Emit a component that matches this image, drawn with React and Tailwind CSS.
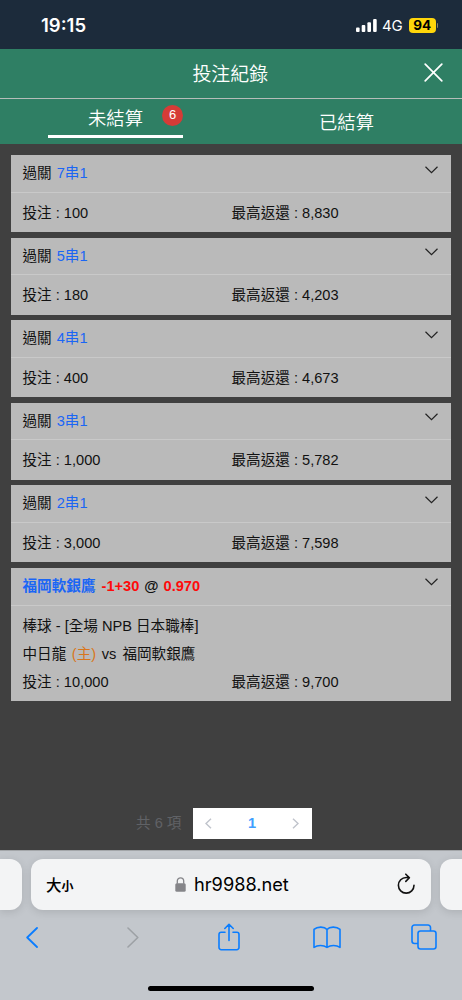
const latin = "font-['Liberation_Sans','Noto_Sans_CJK_TC',sans-serif]";

const parlays = [
  { type: "7串1", stake: "100", payout: "8,830" },
  { type: "5串1", stake: "180", payout: "4,203" },
  { type: "4串1", stake: "400", payout: "4,673" },
  { type: "3串1", stake: "1,000", payout: "5,782" },
  { type: "2串1", stake: "3,000", payout: "7,598" },
];

const StatusBar = () => (
  <div className="h-[49px] bg-[#1c2b3b] flex items-center justify-between pl-[41px] pr-[24px] pt-[2px] text-white font-[Inter,sans-serif]">
    <span className="text-[18.5px] leading-none font-semibold">19:15</span>
    <div className="flex items-center">
      <svg className="w-[21px] h-[13px]" viewBox="0 0 21 13" fill="#fff">
        <rect x="0" y="8.5" width="3.6" height="4.5" rx="1" />
        <rect x="5.7" y="6" width="3.6" height="7" rx="1" />
        <rect x="11.4" y="3.2" width="3.6" height="9.8" rx="1" />
        <rect x="17.1" y="0" width="3.6" height="13" rx="1" />
      </svg>
      <span className="ml-[5px] w-[21px] text-[15px] leading-none tracking-[-0.2px]">4G</span>
      <span className="ml-[6px] w-[26.5px] h-[15px] rounded-[4px] bg-[#ffd60a] text-black text-[13.5px] leading-[15px] font-bold text-center">94</span>
      <span className="ml-px w-[1.5px] h-[5px] rounded-r bg-[#8a8667]" />
    </div>
  </div>
);

const Header = () => (
  <header className="bg-[#2f7f64] text-white font-['Noto_Sans_CJK_TC',sans-serif]">
    <div className="h-[50px] border-b border-[#b5bdb9] flex items-center px-[23px]">
      <span className="w-[14px]" />
      <h1 className="flex-1 -mt-[2px] text-center text-[18.9px] leading-[28px] font-[350]">投注紀錄</h1>
      <svg className="w-[19px] h-[19px] -mr-[3.5px] -mt-[2px]" viewBox="0 0 19 19" fill="none" stroke="#fff" strokeWidth="1.7" strokeLinecap="round">
        <path d="M1.2 1.2l16.6 16.6M17.8 1.2l-16.6 16.6" />
      </svg>
    </div>
    <nav className="h-[45px] flex text-[18.3px] leading-[28px] font-[350]">
      <div className="w-1/2 flex justify-center">
        <div className="relative w-[135px] h-[39px] border-b-[3px] border-white text-center pt-[4px]">
          未結算
          <span className="absolute right-0 top-[6px] w-[21px] h-[21px] rounded-full bg-[#d63b37] text-[13px] leading-[20px] font-['Liberation_Sans',sans-serif]">6</span>
        </div>
      </div>
      <div className="w-1/2 text-center pt-[8px]">已結算</div>
    </nav>
  </header>
);

const Chevron = () => (
  <svg className="w-[13px] h-[8px] mt-[10.5px]" viewBox="0 0 13 8" fill="none" stroke="#222" strokeWidth="1.2">
    <path d="M0.5 0.8l6 5.8 6-5.8" />
  </svg>
);

const Amounts = ({ stake, payout }) => (
  <div className="flex">
    <span className="w-[209px]">投注 : {stake}</span>
    <span>最高返還 : {payout}</span>
  </div>
);

const Card = ({ title, children }) => (
  <div className="bg-[#bababa]">
    <div className="h-[37.6px] border-b border-[#c9c9c9] flex justify-between pl-[11.5px] pr-[13px] leading-[37px]">
      <div>{title}</div>
      <Chevron />
    </div>
    <div className="pl-[11.5px] pt-[6px] pb-[5.5px] leading-[28px]">{children}</div>
  </div>
);

const Toolbar = () => (
  <footer className="h-[150px] bg-[#c3c7cc] border-t border-[#a3a6a9] overflow-hidden font-[Inter,sans-serif]">
    <div className="h-[58px] pt-[8px] flex gap-[9px]">
      <div className="w-[22px] h-[51px] shrink-0 rounded-r-[12px] bg-[#f3f4f5] shadow-[0_2px_8px_rgba(0,0,0,0.12)]" />
      <div className="w-[400px] h-[51px] shrink-0 rounded-[12px] bg-[#f3f4f5] shadow-[0_2px_8px_rgba(0,0,0,0.12)] flex items-center px-[15px]">
        <div className="w-[129px] font-['Noto_Sans_CJK_TC',sans-serif] font-medium text-black flex items-baseline">
          <span className="text-[15.5px]">大</span>
          <span className="text-[12px] font-bold">小</span>
        </div>
        <svg className="w-[11px] h-[15px]" viewBox="0 0 11 15">
          <rect x="0.3" y="6.2" width="10.4" height="8.5" rx="1.5" fill="#858589" />
          <path d="M2.3 6.8V4a3.2 3.2 0 0 1 6.4 0v2.8" fill="none" stroke="#858589" strokeWidth="1.3" />
        </svg>
        <span className="ml-[8px] flex-1 text-[18.2px] leading-none text-black">hr9988.net</span>
        <svg className="w-[20px] h-[22px] -mt-[2px]" viewBox="0 0 20 22" fill="none" stroke="#111" strokeWidth="1.6" strokeLinecap="round" strokeLinejoin="round">
          <path d="M18 12.3a7.8 7.8 0 1 1-7.8-7.8c1.1 0 2 .1 2.8.3M9.8 1.2l3.6 3.6-3.6 3.6" />
        </svg>
      </div>
      <div className="w-[40px] h-[51px] shrink-0 rounded-l-[12px] bg-[#f3f4f5] shadow-[0_2px_8px_rgba(0,0,0,0.12)]" />
    </div>
    <div className="h-[54px] flex items-center pl-[26px] text-[#0a7dff]">
      <svg className="w-[12px] h-[21px] mt-[3px]" viewBox="0 0 12 21" fill="none" stroke="currentColor" strokeWidth="1.8" strokeLinecap="round" strokeLinejoin="round">
        <path d="M11 1L1.2 10.5 11 20" />
      </svg>
      <svg className="w-[12px] h-[21px] mt-[3px] ml-[88.5px]" viewBox="0 0 12 21" fill="none" stroke="#9da1a5" strokeWidth="1.6" strokeLinecap="round" strokeLinejoin="round">
        <path d="M1 1l9.8 9.5L1 20" />
      </svg>
      <svg className="w-[22px] h-[28px] mt-px ml-[79.5px]" viewBox="0 0 22 28" fill="none" stroke="currentColor" strokeWidth="1.6" strokeLinecap="round" strokeLinejoin="round">
        <path d="M7 9.3H3.200a2.200 2.200 0 0 0-2.200 2.200v13A2.200 2.200 0 0 0 3.200 26.700h15.600a2.200 2.200 0 0 0 2.200-2.200v-13a2.200 2.200 0 0 0-2.200-2.200H15M11 17.500V1.500M6.800 5.500L11 1.300l4.200 4.200" />
      </svg>
      <svg className="w-[28px] h-[23px] mt-[3px] ml-[72.5px]" viewBox="0 0 28 23" fill="none" stroke="currentColor" strokeWidth="1.6" strokeLinejoin="round">
        <path d="M14 3.400C11.500.5 4.500.2 1 3.400v18c3.500-2.500 9.500-2.500 13 0 3.500-2.500 9.500-2.500 13 0v-18C23.500.2 16.500.5 14 3.400zM14 3.400v18" />
      </svg>
      <svg className="w-[26px] h-[26px] mt-[2px] ml-[70.5px]" viewBox="0 0 26 26" fill="none" stroke="currentColor" strokeWidth="1.6">
        <path d="M7 19.500H3.500A2.500 2.500 0 0 1 1 17V3.500A2.500 2.500 0 0 1 3.500 1H17a2.500 2.500 0 0 1 2.500 2.500V7" />
        <rect x="7" y="7" width="18" height="18" rx="2.500" />
      </svg>
    </div>
    <div className="mx-auto mt-[22.5px] w-[166px] h-[5.5px] rounded-full bg-black" />
  </footer>
);

export default function App() {
  return (
    <div className="w-[462px] h-[1000px] overflow-hidden flex flex-col bg-[#404040]">
      <StatusBar />
      <Header />
      <main className={`flex-1 flex flex-col px-[11px] pt-[11px] text-[14.6px] text-[#111] ${latin}`}>
        <div className="flex flex-col gap-[5.5px]">
          {parlays.map((p) => (
            <Card key={p.type} title={<>過關 <span className="ml-px text-[#1a66f5]">{p.type}</span></>}>
              <Amounts stake={p.stake} payout={p.payout} />
            </Card>
          ))}
          <Card
            title={
              <b>
                <span className="text-[#1a66f5]">福岡軟銀鷹</span> <span className="ml-[2px] text-[#ff0a0a]">-1+30</span>
                <span className="mx-[5px]">@</span>
                <span className="text-[#ff0a0a]">0.970</span>
              </b>
            }
          >
            <p>棒球 - [全場 NPB 日本職棒]</p>
            <p>中日龍 <span className="mx-[1.5px] text-[#d9761c]">(主)</span> vs <span className="ml-[2px]">福岡軟銀鷹</span></p>
            <Amounts stake="10,000" payout="9,700" />
          </Card>
        </div>
        <div className="mt-auto mb-[11px] pl-[125px] flex items-center">
          <span className="w-[57px] text-[14.6px] leading-[27px] -mt-px text-[#606266]">共 6 項</span>
          <div className="w-[119px] h-[31px] bg-white flex items-center justify-between px-[12px]">
            <svg className="w-[7px] h-[11px]" viewBox="0 0 7 11" fill="none" stroke="#c0c4cc" strokeWidth="1.4">
              <path d="M6 .7L1 5.500l5 4.800" />
            </svg>
            <span className="text-[14.6px] font-bold text-[#409eff]">1</span>
            <svg className="w-[7px] h-[11px] mr-px" viewBox="0 0 7 11" fill="none" stroke="#c0c4cc" strokeWidth="1.4">
              <path d="M1 .7l5 4.800-5 4.800" />
            </svg>
          </div>
        </div>
      </main>
      <Toolbar />
    </div>
  );
}
